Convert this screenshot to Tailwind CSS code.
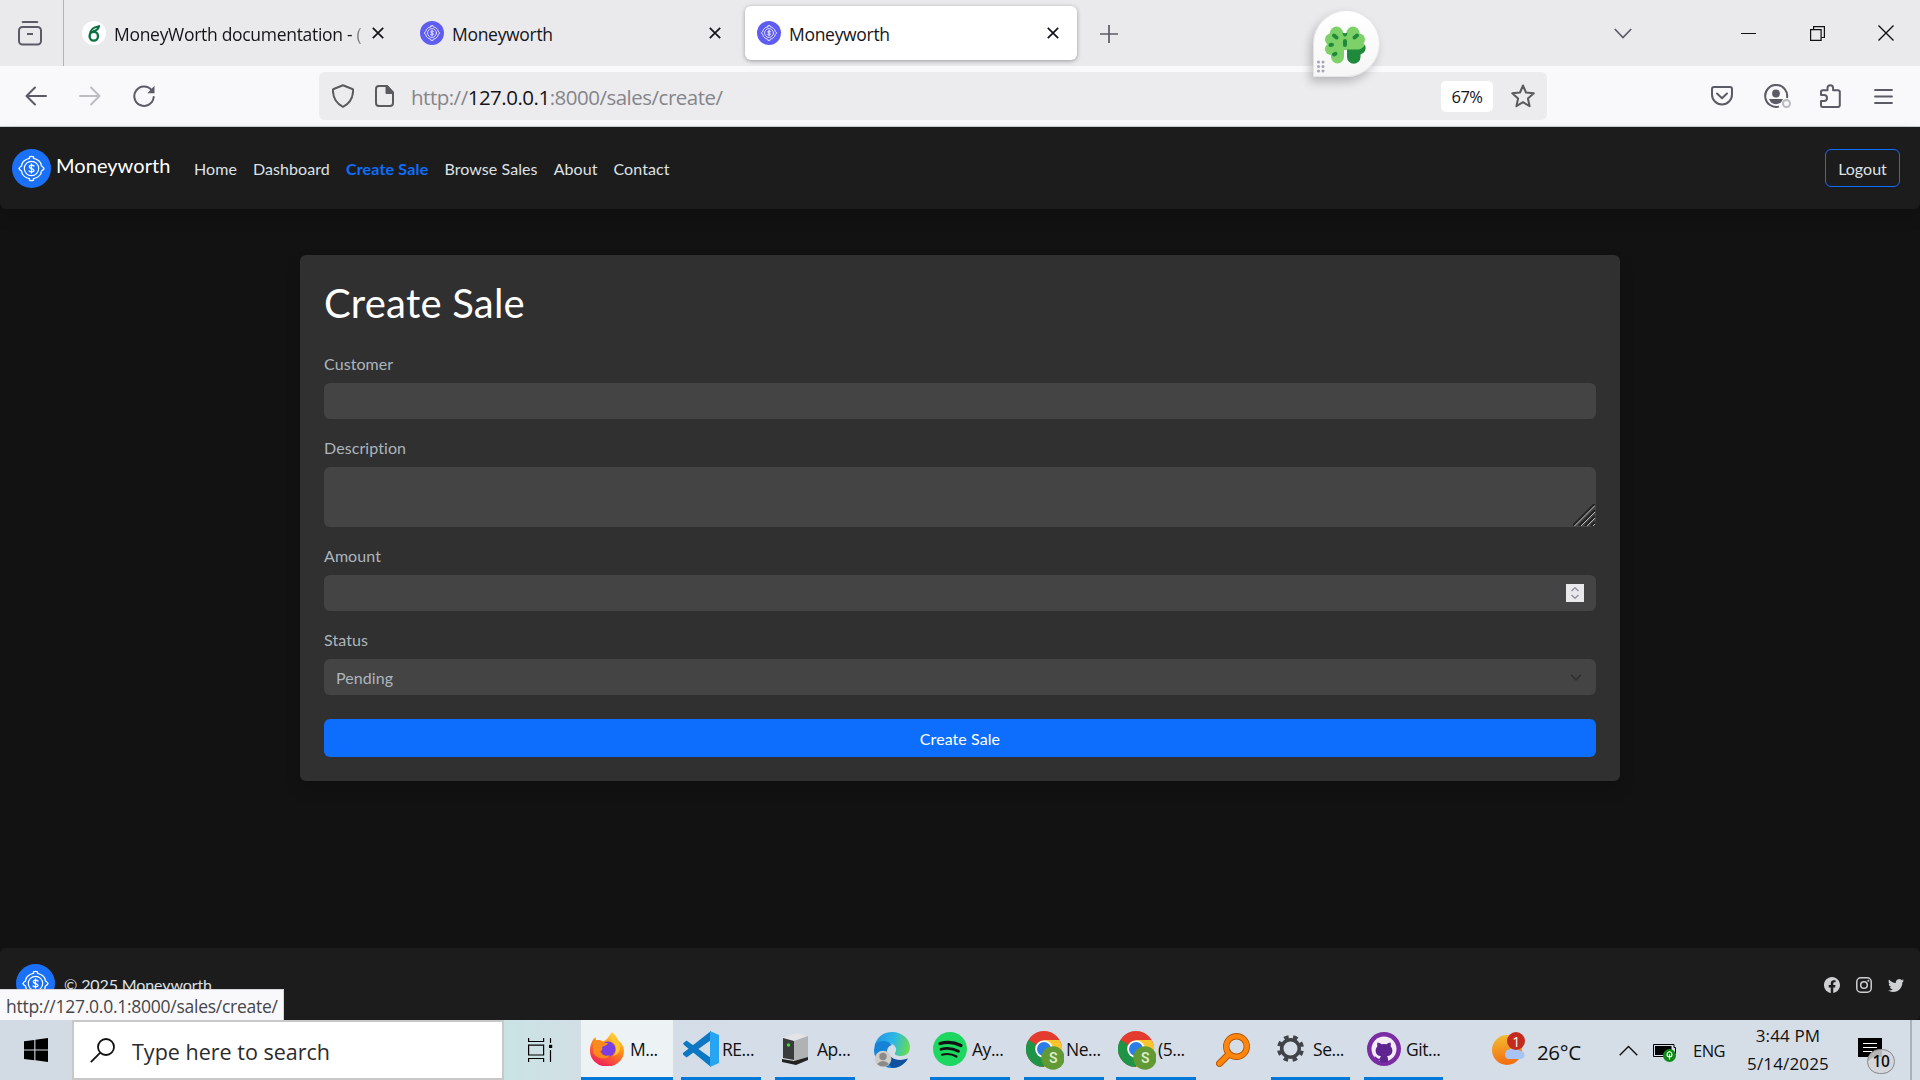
<!DOCTYPE html>
<html lang="en">
<head>
<meta charset="utf-8">
<title>Moneyworth</title>
<script src="https://cdn.jsdelivr.net/npm/@tailwindcss/browser@4"></script>
</head>
<body class="relative flex h-[1080px] w-[1920px] flex-col overflow-hidden bg-[#121212] font-['Open_Sans',sans-serif]">

<svg class="hidden">
  <symbol id="coin" viewBox="0 0 39 39">
    <circle cx="19.500" cy="19.500" r="19.500"/>
    <g fill="none" stroke="#fff" stroke-width="1.300" stroke-linejoin="round" stroke-linecap="round">
      <path d="M17.500 9.300V7.800q2-1 4 0v1.500q4.600.8 7.200 4.700l.8 3q2.200 1.200 2.500 2.500-.3 1.300-2.500 2.500l-.8 3q-2.600 3.900-7.200 4.700v1.500q-2 1-4 0v-1.500q-4.600-.8-7.200-4.700l-.8-3q-2.200-1.200-2.500-2.500.3-1.300 2.500-2.500l.8-3q2.600-3.900 7.200-4.700Z"/>
      <circle cx="19.500" cy="19.500" r="7.200" stroke-width="1.200"/>
      <path d="M22 17c-1-1.300-4.700-1.200-4.700.7 0 2.300 4.700 1.300 4.700 3.700 0 1.900-3.900 1.900-5 .5M19.500 15v9"/>
    </g>
  </symbol>
  <symbol id="x" viewBox="0 0 12 12"><path d="M.8.800 11.200 11.200M11.200.800.800 11.200" fill="none" stroke="currentColor" stroke-width="1.700"/></symbol>
  <symbol id="chrome" viewBox="0 0 38 39">
    <circle cx="18" cy="18" r="18" fill="#e33b2e"/>
    <path d="M18 18 2.400 9A18 18 0 0 0 18 36l8-13Z" fill="#1e9446"/>
    <path d="M18 9h15.600A18 18 0 0 1 18 36l7.800-13.500Z" fill="#fcc42d"/>
    <circle cx="18" cy="18" r="8.800" fill="#fff"/>
    <circle cx="18" cy="18" r="7" fill="#2b7de9"/>
    <circle cx="27" cy="27" r="11.700" fill="#619a35"/>
    <text x="27" y="32.200" text-anchor="middle" font-size="14" font-weight="600" fill="#dcebc9" font-family="Roboto, sans-serif">S</text>
  </symbol>
</svg>

<!-- Tab strip -->
<header class="flex h-[66px] shrink-0 items-center bg-[#eaeaec] text-[17.500px] tracking-[-0.300px] text-[#15141a]">
  <div class="flex h-full w-16 items-center border-r border-[#b4b4b8] pl-[18px]">
    <svg class="h-[25px] w-6" viewBox="0 0 24 25" fill="none" stroke="#5b5b66" stroke-width="2"><path d="M4 1.500Q4.500 1 5.500 1h13q1 0 1.500.5"/><rect x="1" y="6" width="22" height="17.500" rx="3.500"/><path d="M9 13h6"/></svg>
  </div>
  <div class="flex w-[338px] items-center pl-[18px]">
    <span class="flex size-6 items-center justify-center rounded-full bg-white">
      <svg class="h-[17px] w-3" viewBox="0 0 12 17" fill="none" stroke="#0c7041" stroke-width="2.400"><ellipse cx="5.800" cy="11.200" rx="4.200" ry="4.400"/><path d="M1.800 10C1.800 5.500 4 2.200 11 1.200 10.500 4 8.500 5.500 5 6.300" stroke-width="2"/></svg>
    </span>
    <span class="mt-0.5 ml-2 w-[253px] overflow-hidden bg-gradient-to-r from-[#15141a] from-93% to-[#15141a]/5 bg-clip-text whitespace-nowrap text-transparent">MoneyWorth documentation - (</span>
    <svg class="ml-[5px] size-3 shrink-0"><use href="#x"/></svg>
  </div>
  <div class="flex w-[342px] items-center pl-[18px]">
    <svg class="size-6 shrink-0 fill-[#5f5df0]"><use href="#coin"/></svg>
    <span class="mt-0.5 ml-2 w-[257px]">Moneyworth</span>
    <svg class="size-3 shrink-0"><use href="#x"/></svg>
  </div>
  <div class="ml-px flex h-[54px] w-[332px] items-center rounded-md bg-white pl-3 shadow-[0_1px_4px_rgba(0,0,0,0.35)]">
    <svg class="size-6 shrink-0 fill-[#5f5df0]"><use href="#coin"/></svg>
    <span class="mt-0.5 ml-2 w-[258px]">Moneyworth</span>
    <svg class="size-3 shrink-0"><use href="#x"/></svg>
  </div>
  <svg class="mt-px ml-[23px] size-[18px]" viewBox="0 0 18 18" stroke="#5b5b66" stroke-width="1.700"><path d="M9 0v18M0 9h18"/></svg>
  <svg class="ml-[496px] h-[11px] w-[18px]" viewBox="0 0 18 11" fill="none" stroke="#5b5b66" stroke-width="1.700"><path d="m.8 1 8.200 8.500L17.200 1"/></svg>
  <svg class="ml-[109px] h-px w-[15px]" viewBox="0 0 15 1"><path d="M0 .5h15" stroke="#111"/></svg>
  <svg class="ml-[54px] size-[15px]" viewBox="0 0 15 15" fill="none" stroke="#111" stroke-width="1.200"><path d="M.6 3.600h10.500v10.800H.6ZM3.600 3.500V.6h10.800v10.900h-3"/></svg>
  <svg class="ml-[53px] size-4" viewBox="0 0 16 16" stroke="#111" stroke-width="1.400"><path d="m.5.500 15 15M15.500.500l-15 15"/></svg>
</header>

<!-- Toolbar -->
<div class="flex h-[61px] shrink-0 items-center border-b border-[#ccd0d0] bg-[#f9f9fb]">
  <svg class="ml-[25px] h-5 w-[22px]" viewBox="0 0 22 20" fill="none" stroke="#5b5b66" stroke-width="2" stroke-linecap="round" stroke-linejoin="round"><path d="M10 1.500 1.500 10l8.500 8.500M1.500 10H21"/></svg>
  <svg class="ml-8 h-5 w-[22px]" viewBox="0 0 22 20" fill="none" stroke="#bdbdc3" stroke-width="2" stroke-linecap="round" stroke-linejoin="round"><path d="m12 1.500 8.500 8.500-8.500 8.500M20.500 10H1"/></svg>
  <svg class="ml-8 size-[22px]" viewBox="0 0 22 22" fill="none" stroke="#5b5b66" stroke-width="2" stroke-linecap="round"><path d="M18.500 5A9.700 9.700 0 1 0 20.700 12"/><path d="M21.500.800v7.400h-7.200Z" fill="#5b5b66" stroke="none"/></svg>
  <div class="ml-[164px] flex h-12 w-[1228px] items-center rounded-md bg-[#ececee] pl-[13px]">
    <svg class="h-6 w-[22px]" viewBox="0 0 22 24" fill="none" stroke="#5b5b5f" stroke-width="2" stroke-linejoin="round"><path d="m11 1.200 9.300 3.800q1 .4.900 1.500C20.800 14 18 19.500 11 22.800 4 19.500 1.200 14 .9 6.500.8 5.400 1.700 5 1.700 5Z"/></svg>
    <svg class="ml-[21px] h-[22px] w-[19px]" viewBox="0 0 19 22" fill="none" stroke="#5b5b5f" stroke-width="2"><path d="M12 1H4Q1 1 1 4v14q0 3 3 3h11q3 0 3-3V7.500Z" stroke-linejoin="round"/><path d="M11.500 1v7H18Z" fill="#5b5b5f" stroke-linejoin="round"/></svg>
    <span class="mt-0.5 ml-[17px] w-[1030px] text-[20.500px] tracking-[-0.500px] text-[#85858a]">http://<span class="text-[#15141a]">127.0.0.1</span>:8000/sales/create/</span>
    <span class="flex h-[31px] w-[52px] shrink-0 items-center justify-center rounded-[5px] bg-white pt-0.5 text-[16.500px] tracking-[-0.500px] text-[#15141a]">67%</span>
    <svg class="ml-[18px] size-6 shrink-0" viewBox="0 0 24 24" fill="none" stroke="#5b5b5f" stroke-width="2" stroke-linejoin="round"><path d="M12 1.500 15 8.500l7.800.8-5.900 5.200 1.700 7.700L12 18.200l-6.600 4 1.700-7.700L1.200 9.300 9 8.500Z"/></svg>
  </div>
  <svg class="ml-[164px] h-5 w-[22px]" viewBox="0 0 22 20" fill="none" stroke="#5b5b66" stroke-width="2" stroke-linecap="round" stroke-linejoin="round"><path d="M3 1h16q2 0 2 2v5.500a10 10 0 0 1-20 0V3q0-2 2-2ZM6 7.500l5 4.800 5-4.800"/></svg>
  <svg class="ml-[31px] h-6 w-[27px]" viewBox="0 0 27 24" fill="none" stroke="#5b5b66" stroke-width="2"><path d="M23 14a11 11 0 1 0-8 8.600"/><circle cx="12" cy="9.500" r="3.900" fill="#5b5b66" stroke="none"/><path d="M5 15h14l-2 3.500q-5 3.300-10 0Z" fill="#5b5b66" stroke="none"/><circle cx="22.500" cy="19.500" r="3.500" stroke="#b9b9be"/></svg>
  <svg class="ml-[29px] h-6 w-[21px]" viewBox="0 0 21 24" fill="none" stroke="#5b5b66" stroke-width="2" stroke-linejoin="round"><path d="M1 11V8q0-1.700 1.700-1.700H7.500V4a2.800 2.800 0 0 1 5.600 0v2.300h4.700q2 0 2 1.700v13q0 2-2 2H2.700Q1 23 1 21v-4h3a3 3 0 0 0 0-6Z"/></svg>
  <svg class="ml-[33px] h-[15px] w-[19px]" viewBox="0 0 19 15" stroke="#5b5b66" stroke-width="1.800" stroke-linecap="round"><path d="M1 1h17M1 7.500h17M1 14h17"/></svg>
</div>

<!-- Site navigation -->
<nav class="flex h-[82px] shrink-0 items-center rounded-b-md bg-[#1c1c1c] pr-5 pl-3 font-['Lato',sans-serif] text-[16px] text-[#dee2e6] shadow-[0_8px_16px_rgba(0,0,0,0.15)]">
  <svg class="size-[39px] fill-[#1a71f8]"><use href="#coin"/></svg>
  <span class="mb-1.5 ml-[5px] w-[138px] text-[20px] tracking-[0.050px] text-white">Moneyworth</span>
  <div class="mt-px flex gap-4 tracking-[0.080px]">
    <a>Home</a><a>Dashboard</a><a class="font-bold tracking-[0.180px] text-[#0d6efd]">Create Sale</a><a>Browse Sales</a><a>About</a><a>Contact</a>
  </div>
  <a class="ml-auto flex h-[38px] w-[75px] items-center justify-center rounded-md border border-[#0d6efd] pt-px">Logout</a>
</nav>

<!-- Sale form -->
<main class="flex grow flex-col items-center pt-[46px] font-['Lato',sans-serif] text-[16px] leading-6 tracking-[0.080px] text-[#adb5bd]">
  <form class="flex w-[1320px] flex-col rounded-md bg-[#303030] p-6 shadow-[0_8px_16px_rgba(0,0,0,0.15)]">
    <h1 class="mb-6 text-[40px] leading-[48px] tracking-[0.220px] text-white">Create Sale</h1>
    <label class="mb-[7px] pt-px">Customer</label>
    <div class="mb-4 h-9 rounded-md bg-[#444]"></div>
    <label class="mb-[7px] pt-px">Description</label>
    <div class="mb-4 flex h-[60px] items-end justify-end rounded-md bg-[#444] p-px">
      <svg class="size-[22px]" viewBox="0 0 22 22" fill="none"><path d="M-.500 22 21.500 0M6 22 22 6M12 22 22 12M18 22l4-4" stroke="#222" stroke-width="2"/><path d="M1.500 22 22 1.500M8 22 22 8M14 22l8-8M20 22l2-2" stroke="#bbb" stroke-width="1"/></svg>
    </div>
    <label class="mb-[7px] pt-px">Amount</label>
    <div class="mb-4 flex h-9 items-center justify-end rounded-md bg-[#444] pr-3">
      <span class="flex size-[18px] items-center justify-center bg-[#e9e9ed]"><svg class="h-3 w-2" viewBox="0 0 8 12" fill="none" stroke="#8f8f9d" stroke-width="1.400"><path d="M.5 4 4 .800 7.500 4M.5 8 4 11.200 7.500 8"/></svg></span>
    </div>
    <label class="mb-[7px] pt-px">Status</label>
    <div class="mb-6 flex h-9 items-center justify-between rounded-md bg-[#444] pt-0.5 pr-[14px] pl-3">Pending
      <svg class="mb-px h-[7px] w-3" viewBox="0 0 12 7" fill="none" stroke="#303030" stroke-width="1.600"><path d="m1 .800 5 5 5-5"/></svg>
    </div>
    <div class="flex h-[38px] items-center justify-center rounded-md bg-[#0d6efd] pt-0.5 text-white">Create Sale</div>
  </form>
</main>

<!-- Site footer -->
<footer class="relative flex h-[72px] shrink-0 items-start rounded-md bg-[#1c1c1c] px-4 pt-4 font-['Lato',sans-serif] text-[16px] leading-6 text-[#dee2e6]">
  <svg class="size-[39px] fill-[#1a71f8]"><use href="#coin"/></svg>
  <span class="mt-[9px] ml-[9px] tracking-[-0.110px]">© 2025 Moneyworth</span>
  <div class="mt-[13px] ml-auto flex gap-4">
    <svg class="size-4" viewBox="0 0 16 16" fill="#ced0d2"><path d="M16 8.049c0-4.446-3.582-8.050-8-8.050C3.580 0-.002 3.603-.002 8.050c0 4.017 2.926 7.347 6.750 7.951v-5.625h-2.030V8.050H6.750V6.275c0-2.017 1.195-3.131 3.022-3.131.876 0 1.791.157 1.791.157v1.980h-1.009c-.993 0-1.303.621-1.303 1.258v1.510h2.218l-.354 2.326H9.250V16c3.824-.604 6.750-3.934 6.750-7.951"/></svg>
    <svg class="size-4" viewBox="0 0 16 16" fill="none" stroke="#ced0d2" stroke-width="1.500"><rect x=".8" y=".8" width="14.400" height="14.400" rx="4"/><circle cx="8" cy="8" r="3.300"/><circle cx="12.300" cy="3.700" r="1" fill="#ced0d2" stroke="none"/></svg>
    <svg class="size-4" viewBox="0 0 16 16" fill="#ced0d2"><path d="M5.026 15c6.038 0 9.341-5.003 9.341-9.334q.002-.211-.006-.422A6.700 6.700 0 0 0 16 3.542a6.700 6.700 0 0 1-1.889.518 3.300 3.300 0 0 0 1.447-1.817 6.500 6.500 0 0 1-2.087.793A3.286 3.286 0 0 0 7.875 6.030a9.320 9.320 0 0 1-6.767-3.429 3.290 3.290 0 0 0 1.018 4.382A3.300 3.300 0 0 1 .640 6.575v.045a3.290 3.290 0 0 0 2.632 3.218 3.200 3.200 0 0 1-.865.115 3 3 0 0 1-.614-.057 3.280 3.280 0 0 0 3.067 2.277A6.600 6.600 0 0 1 .780 13.580a6 6 0 0 1-.780-.045A9.340 9.340 0 0 0 5.026 15"/></svg>
  </div>
  <!-- Link status tooltip -->
  <div class="absolute bottom-0 left-0 flex h-[31px] w-[284px] items-center border-t border-r border-[#d7d7db] bg-[#f9f9fb] pt-px pl-[6px] font-['Open_Sans',sans-serif] text-[17.500px] tracking-[-0.260px] whitespace-nowrap text-[#45454a]">http://127.0.0.1:8000/sales/create/</div>
</footer>

<!-- Taskbar -->
<div class="flex h-[60px] shrink-0 items-center bg-gradient-to-r from-[#d2dbe3] via-[#d5dde8] via-45% to-[#d5dee7] text-[17.500px] tracking-[-0.450px] whitespace-nowrap text-[#111]">
  <div class="flex h-full w-[72px] items-center pl-6">
    <svg class="size-6" viewBox="0 0 24 24" fill="#000"><path d="M0 3.300 10.300 1.900v9.500H0ZM11.400 1.700 24 0v11.400H11.400ZM0 12.500h10.300v9.700L0 20.900ZM11.400 12.500H24V24l-12.600-1.700Z"/></svg>
  </div>
  <div class="flex h-full w-[432px] items-center border-2 border-[#c8c8c8] bg-white pl-4">
    <svg class="size-[25px]" viewBox="0 0 25 25" fill="none" stroke="#111" stroke-width="1.800"><circle cx="16" cy="9" r="8"/><path d="M10.300 14.700.8 24.200"/></svg>
    <span class="mt-1 ml-[17px] text-[21.500px] tracking-[0.010px] text-[#2b2b2b]">Type here to search</span>
  </div>
  <div class="flex h-full w-[77px] items-center bg-gradient-to-r from-[#c9e3e4] to-[#d2dfe5] pl-6">
    <svg class="h-6 w-[25px]" viewBox="0 0 25 24" fill="none" stroke="#000" stroke-width="1.200"><path d="M.6 0v3.500h15V0M.6 24v-3.500h15V24M.6 7.200h15v9.800H.6ZM22.500 0v5M22.500 12v12"/><path d="M21 6.800h3.200V10H21Z" fill="#000" stroke="none"/></svg>
  </div>
  <div class="flex h-full w-[92px] items-center border-b-[3px] border-[#0078d7] bg-[#edf2f5] pl-[9px]">
    <svg class="size-[34px]" viewBox="0 0 34 34"><defs><linearGradient id="ff" x1=".8" y1="0" x2=".3" y2="1"><stop offset="0" stop-color="#ffe23d"/><stop offset=".45" stop-color="#ff8a16"/><stop offset="1" stop-color="#f0195f"/></linearGradient></defs><path d="M22 0c3 3 5 5 6 8 4 3 6 7 6 11a17 15.500 0 0 1-34 0C0 13 2 8 5.500 5c0 2 .5 3 1.500 4 2-1 4-.5 6 .5C17 8 19 4 22 0Z" fill="url(#ff)"/><circle cx="18" cy="17" r="7.500" fill="#7a3fe0"/><path d="M3 10c4-3 8-2 10 0 2 1 4 1 5 1-1 3-5 3-6 4 1 2 0 4-2 4 1 4 6 6 10 4-4 6-14 4-17-3Z" fill="#ff8a1c"/><path d="M22 1c-2 5-1 7 2 10 3 4 3 9-1 13 8-2 9-11 4-15-3-3-4-5-5-8Z" fill="#ffc52e"/></svg>
    <span class="mt-0.5 ml-[6px]">M...</span>
  </div>
  <div class="ml-2 flex h-full w-20 items-center border-b-[3px] border-[#0078d7] pl-0.5">
    <svg class="size-9 shrink-0" viewBox="0 0 36 36"><path d="M0 12.500 3.500 9.500 28 27v9L1 14Z" fill="#0a78c4"/><path d="M0 23.500 3.500 26.500 28 9V0L0 22Z" fill="#0f76c4"/><path d="M27 0 36 4v28l-9 4Z" fill="#27a4f2"/></svg>
    <span class="mt-0.5 ml-[3px]">RE...</span>
  </div>
  <div class="ml-[14px] flex h-full w-20 items-center border-b-[3px] border-[#0078d7] pl-[7px]">
    <svg class="h-8 w-[27px] shrink-0" viewBox="0 0 27 32"><path d="M1 5 15 0l11 3-14 5Z" fill="#e4e4e6"/><path d="m1 5 11 3v19L1 25Z" fill="#3b3b3b"/><path d="m12 8 14-5v21l-14 4Z" fill="#b0b2b4"/><path d="m0 26 12 2 14-4v3l-12 5-14-3Z" fill="#222"/><circle cx="6.500" cy="12" r="1.700" fill="#3ae03a"/></svg>
    <span class="mt-0.5 ml-2">Ap...</span>
  </div>
  <div class="ml-[19px] flex h-full w-9 items-center">
    <svg class="size-9" viewBox="0 0 36 36"><defs><linearGradient id="eg" x1="0" y1=".4" x2="1" y2=".6"><stop offset="0" stop-color="#2596e6"/><stop offset=".5" stop-color="#2bb8e6"/><stop offset="1" stop-color="#69dd4c"/></linearGradient></defs><path d="M1 12C4 4 10 0 18 0c10 0 18 7 18 15 0 6-4 9-9 9-4 0-7-1-6-3 3-4 0-9-6-10-6-.5-11-.5-14 1Z" fill="url(#eg)"/><path d="M1 12c5-4 13-4 17 1-4 1-6 5-4.500 9 2 5 9 8.500 20 5C30 33 24 36 18 36 8 36 0 28 0 18Z" fill="#1683d8"/><path d="M13.500 20c1 5 9 10.500 20.500 6.500C30 33 24 36 18 36c-5-5-6-11-4.500-16Z" fill="#114f9f"/><circle cx="9" cy="27" r="8.300" fill="#cfcdca"/><circle cx="9" cy="24.500" r="3.700" fill="#8c8a88"/><path d="M3 32q6-6 12 0-6 5-12 0Z" fill="#8c8a88"/></svg>
  </div>
  <div class="ml-5 flex h-full w-20 items-center border-b-[3px] border-[#0078d7] pl-[3px]">
    <svg class="size-[34px] shrink-0" viewBox="0 0 34 34" fill="none" stroke="#111" stroke-linecap="round"><circle cx="17" cy="17" r="17" fill="#1ed760" stroke="none"/><path d="M7 11.500q11-3 21 2" stroke-width="3.200"/><path d="M8 17.300q9-2.500 17.500 2" stroke-width="2.700"/><path d="M9 22.700q8-2 14.500 1.800" stroke-width="2.200"/></svg>
    <span class="mt-0.5 ml-[5px]">Ay...</span>
  </div>
  <div class="ml-[14px] flex h-full w-20 items-center border-b-[3px] border-[#0078d7] pl-0.5">
    <svg class="mt-[3px] h-[39px] w-[38px] shrink-0"><use href="#chrome"/></svg>
    <span class="mt-0.5 ml-0.5">Ne...</span>
  </div>
  <div class="ml-3 flex h-full w-20 items-center border-b-[3px] border-[#0078d7] pl-0.5">
    <svg class="mt-[3px] h-[39px] w-[38px] shrink-0"><use href="#chrome"/></svg>
    <span class="mt-0.5 ml-0.5">(5...</span>
  </div>
  <div class="ml-5 flex h-full w-[34px] items-center">
    <svg class="size-[34px]" viewBox="0 0 34 34" fill="none" stroke-linecap="round"><g stroke="#b4560a"><circle cx="20.500" cy="13.500" r="10.300" stroke-width="6.400"/><path d="M12.500 21.500 3.500 30.500" stroke-width="7"/></g><g stroke="#ff860d"><circle cx="20.500" cy="13.500" r="10.300" stroke-width="4.600"/><path d="M12.500 21.500 3.500 30.500" stroke-width="5"/></g></svg>
  </div>
  <div class="ml-[21px] flex h-full w-[79px] items-center border-b-[3px] border-[#0078d7] pl-[6px]">
    <svg class="size-[27px] shrink-0" viewBox="-13.500 -13.500 27 27" fill="none" stroke="#404347"><circle r="8.800" stroke-width="3.600"/><circle r="11.700" stroke-width="3.600" stroke-dasharray="4.600 4.590" stroke-dashoffset="-2.300"/></svg>
    <span class="mt-0.5 ml-[9px]">Se...</span>
  </div>
  <div class="ml-[14px] flex h-full w-[79px] items-center border-b-[3px] border-[#0078d7] pl-[3px]">
    <svg class="size-[34px] shrink-0" viewBox="0 0 34 34"><circle cx="17" cy="17" r="17" fill="#7a2da3"/><circle cx="17" cy="17" r="12.500" fill="#f4ecf8"/><path d="M10.500 10.500q2.300.2 4 1.700 2.500-.6 5 0 1.700-1.500 4-1.700.7 2 .1 3.800 3 3.400 1 7.400-1.400 2.200-4.600 2.600 1 1 1 2.700v3.500h-8V28q-4 .8-5.500-3.500 1.500-.5 2.500 1.500 1.500 1.500 3 .3.200-1.300 1-2-3.200-.4-4.600-2.600-2-4 1-7.400-.6-1.800.1-3.800Z" fill="#5e2590"/></svg>
    <span class="mt-0.5 ml-[5px]">Git...</span>
  </div>
  <div class="relative ml-[49px] flex h-full w-11 items-center">
    <svg class="mb-[3px] size-[33px]" viewBox="0 0 33 33"><defs><linearGradient id="sun" x1=".4" y1="0" x2=".5" y2="1"><stop offset="0" stop-color="#f2bb32"/><stop offset="1" stop-color="#f36b0e"/></linearGradient></defs><circle cx="15" cy="18" r="15" fill="url(#sun)"/><path d="M16 27a5 5 0 0 1 1-9.500 7 6 0 0 1 11 1.500 4 4 0 0 1 1 8Z" fill="#a9c4f2"/></svg>
    <span class="absolute top-3 left-[15px] flex size-[18px] items-center justify-center rounded-full bg-[#c42b1c] text-[14px] text-white">1</span>
  </div>
  <span class="mt-1 ml-px w-[82px] text-[20.500px] tracking-[-0.350px]">26°C</span>
  <svg class="h-[11px] w-[19px]" viewBox="0 0 19 11" fill="none" stroke="#111" stroke-width="1.400"><path d="m.7 10.200 8.800-8.800 8.800 8.800"/></svg>
  <svg class="mt-1 ml-[15px] h-5 w-6" viewBox="0 0 24 20"><path d="M.5 2.500h20.500v3h1.500v6H21v3H.5Z" fill="none" stroke="#000"/><path d="M2 4h16.500v9H2Z"/><circle cx="16.500" cy="13.500" r="6.500" fill="#0e8a16"/><path d="M16.500 17.500V12M14 12.500q0-2 2.500-3 2.500 1 2.500 3 0 2.500-2.500 2.500-2.500 0-2.500-2.500Z" fill="none" stroke="#fff" stroke-width="1.100"/></svg>
  <span class="mt-0.5 ml-4 w-[54px] text-[16.500px] tracking-[-0.500px]">ENG</span>
  <div class="w-[82px] text-center text-[17px] leading-7 tracking-[0.150px]"><div>3:44 PM</div><div>5/14/2025</div></div>
  <div class="relative ml-[29px] h-full w-[54px] border-r-2 border-[#a9b2bb]">
    <svg class="absolute top-[18px] left-0 h-6 w-6" viewBox="0 0 24 24"><path d="M0 0h24v19h-9l-5 4v-4H0Z"/><path d="M5 5.500h14M5 9.500h14M5 13.500h9" stroke="#fff" stroke-width="1.200"/></svg>
    <span class="absolute top-[29px] left-[9px] flex h-[25px] w-7 items-center justify-center rounded-full border border-[#888] bg-[#d4d6d8]/85 text-[15.500px] font-semibold tracking-[-0.300px]">10</span>
  </div>
</div>

<!-- Floating clover widget -->
<div class="absolute top-[10px] left-[1313px] size-[67px] rounded-full rounded-bl-[3px] border border-[#e4e4e6] bg-gradient-to-b from-white to-[#f6f6f7] shadow-[-3px_5px_10px_rgba(0,0,0,0.22)]">
  <svg class="size-[65px]" viewBox="0 0 65 65">
    <g fill="#7ed169"><circle cx="22.500" cy="22" r="6.500"/><circle cx="39" cy="22" r="6.500"/><circle cx="17" cy="28.500" r="6"/><circle cx="45" cy="28.500" r="6"/><circle cx="17" cy="38" r="6"/><circle cx="46" cy="36" r="5"/><path d="M16 21h10l5 2 5-2h9l4 14-4 4H16l-2-8Z"/><path d="M16 36h14v10a6.500 6.500 0 0 1-13 0Z"/></g>
    <path d="M33 38.500h12q4-1 6-5 2.500 7-4.500 10V46a6.700 6.700 0 0 1-13.500 0Z" fill="#1f8a3b"/>
    <g stroke="#1f8a3b" stroke-width="4" stroke-linecap="round"><path d="m20 24.500 2.500 2M43 24.500l-2.500 2M31 30v4M16.500 34l1.500-.3M20 43.500l1.500-.7"/></g>
    <path d="M28.500 21.500q2.500 1.500 5 0-.5 4-2.500 4t-2.500-4Z" fill="#1f8a3b"/>
    <g fill="#a6a6b8"><circle cx="4.500" cy="51" r="1.500"/><circle cx="9" cy="51" r="1.500"/><circle cx="4.500" cy="55.500" r="1.500"/><circle cx="9" cy="55.500" r="1.500"/><circle cx="4.500" cy="60" r="1.500"/><circle cx="9" cy="60" r="1.500"/></g>
  </svg>
</div>
</body>
</html>
